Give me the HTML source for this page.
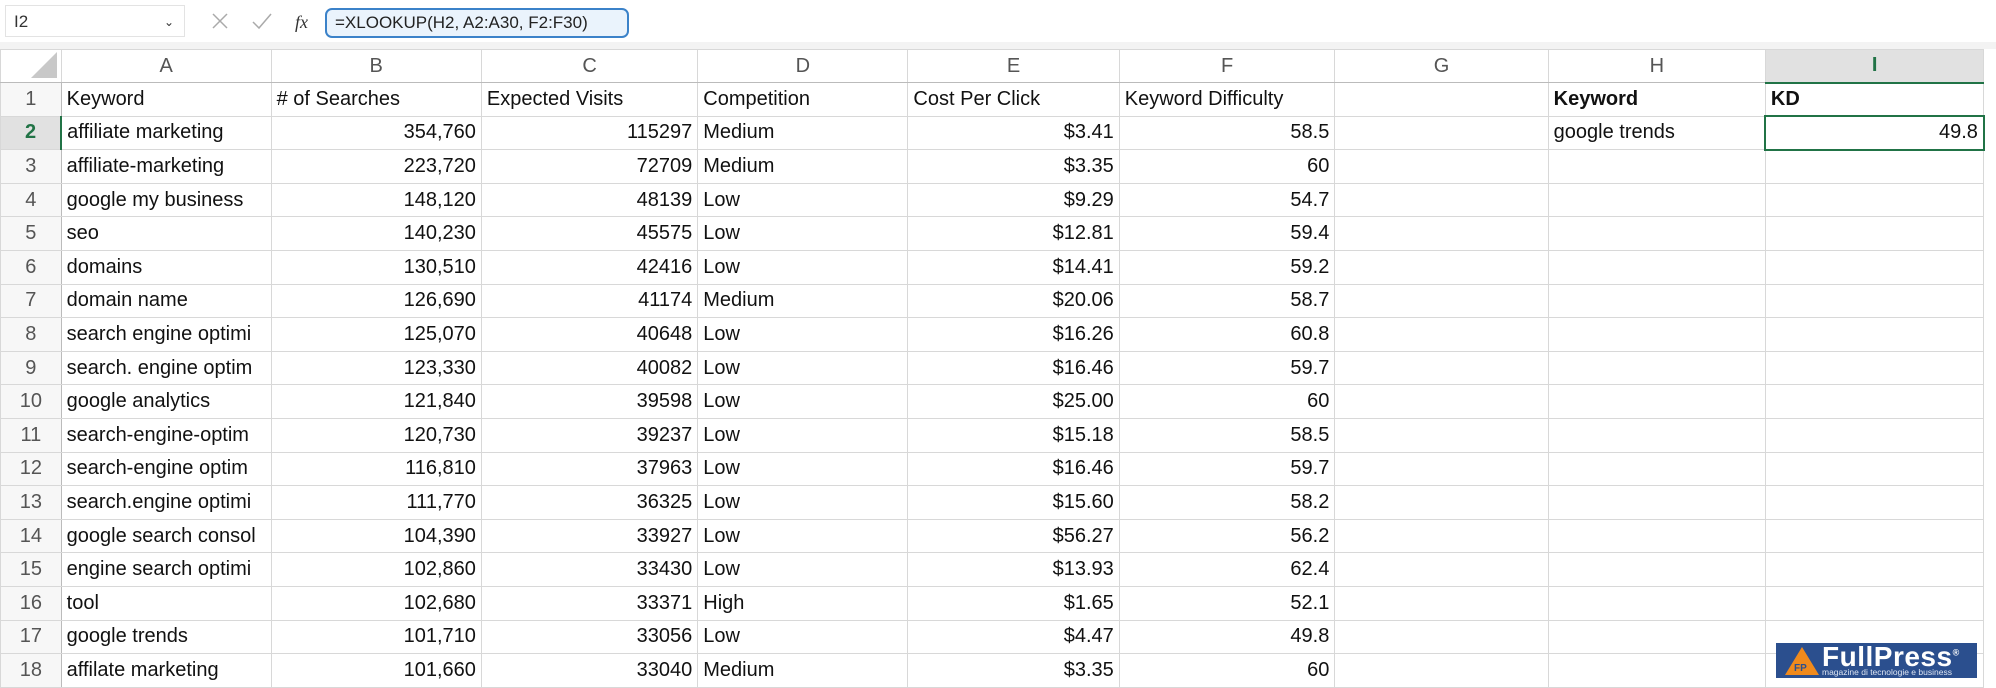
<!DOCTYPE html><html><head><meta charset="utf-8"><style>
body{margin:0;width:1996px;height:686px;overflow:hidden;background:#fff;font-family:"Liberation Sans",sans-serif;position:relative}
.fb{position:absolute;left:0;top:0;width:1996px;height:42px;background:#fff;border-bottom:1px solid #e0e0e0}
.gap{position:absolute;left:0;top:42px;width:1996px;height:7px;background:#f3f3f3}
.nb{position:absolute;left:5px;top:5px;width:180px;height:32px;border:1px solid #e3e3e3;font-size:17px;line-height:32px;padding-left:8px;box-sizing:border-box;color:#333}
.fx{position:absolute;left:325px;top:8px;width:304px;height:30px;border:2px solid #3b82c9;border-radius:7px;background:#eaf3fc;font-size:17px;line-height:26px;padding-left:8px;box-sizing:border-box;color:#222}
table{position:absolute;left:0;top:49px;border-collapse:collapse;table-layout:fixed}
td{border:1px solid #d8d8d8;height:33.6px;padding:0 5px;font-size:20px;white-space:nowrap;overflow:hidden;color:#111;box-sizing:border-box}
tr.h td{height:33px;text-align:center;color:#555;font-size:20px;background:#fff;border-bottom:1px solid #bbb}
td.r{text-align:center;color:#555;background:#f7f7f7;padding:0;border-right:1px solid #bbb}
.n{text-align:right}
</style></head><body>
<div class="fb"><div class="nb">I2<span style="position:absolute;right:10px;font-size:12px">⌄</span></div>
<svg style="position:absolute;left:205px;top:9px" width="120" height="26"><g stroke="#aaa" stroke-width="1.5" fill="none"><path d="M8 5l14 14M22 5L8 19"/><path d="M48 13l6 6 12-14"/></g><text x="90" y="19" font-family="Liberation Serif" font-style="italic" font-size="18" fill="#333">fx</text></svg>
<div class="fx">=XLOOKUP(H2, A2:A30, F2:F30)</div></div>
<div class="gap"></div>
<table>
<colgroup><col style="width:61px"><col style="width:210px"><col style="width:211px"><col style="width:217px"><col style="width:211px"><col style="width:212px"><col style="width:216px"><col style="width:215px"><col style="width:218px"><col style="width:220px"><col style="width:5px"></colgroup>
<tr class="h"><td style="position:relative"><svg style="position:absolute;right:4px;bottom:4px" width="26" height="26"><path d="M26 0V26H0Z" fill="#c8c8c8"/></svg></td><td>A</td><td>B</td><td>C</td><td>D</td><td>E</td><td>F</td><td>G</td><td>H</td><td style="background:#e1e1e1;color:#217346;border-bottom:2px solid #217346;font-weight:bold">I</td><td style="border:none"></td></tr>
<tr><td class="r">1</td><td>Keyword</td><td># of Searches</td><td>Expected Visits</td><td>Competition</td><td>Cost Per Click</td><td>Keyword Difficulty</td><td></td><td style="font-weight:bold">Keyword</td><td style="font-weight:bold">KD</td><td style="border:none"></td></tr>
<tr><td class="r" style="background:#e1e1e1;color:#217346;font-weight:bold;border-right:2px solid #217346">2</td><td>affiliate marketing</td><td class="n">354,760</td><td class="n">115297</td><td>Medium</td><td class="n">$3.41</td><td class="n">58.5</td><td></td><td>google trends</td><td class="n" style="border:2px solid #217346">49.8</td><td style="border:none"></td></tr>
<tr><td class="r">3</td><td>affiliate-marketing</td><td class="n">223,720</td><td class="n">72709</td><td>Medium</td><td class="n">$3.35</td><td class="n">60</td><td></td><td></td><td></td><td style="border:none"></td></tr>
<tr><td class="r">4</td><td>google my business</td><td class="n">148,120</td><td class="n">48139</td><td>Low</td><td class="n">$9.29</td><td class="n">54.7</td><td></td><td></td><td></td><td style="border:none"></td></tr>
<tr><td class="r">5</td><td>seo</td><td class="n">140,230</td><td class="n">45575</td><td>Low</td><td class="n">$12.81</td><td class="n">59.4</td><td></td><td></td><td></td><td style="border:none"></td></tr>
<tr><td class="r">6</td><td>domains</td><td class="n">130,510</td><td class="n">42416</td><td>Low</td><td class="n">$14.41</td><td class="n">59.2</td><td></td><td></td><td></td><td style="border:none"></td></tr>
<tr><td class="r">7</td><td>domain name</td><td class="n">126,690</td><td class="n">41174</td><td>Medium</td><td class="n">$20.06</td><td class="n">58.7</td><td></td><td></td><td></td><td style="border:none"></td></tr>
<tr><td class="r">8</td><td>search engine optimi</td><td class="n">125,070</td><td class="n">40648</td><td>Low</td><td class="n">$16.26</td><td class="n">60.8</td><td></td><td></td><td></td><td style="border:none"></td></tr>
<tr><td class="r">9</td><td>search. engine optim</td><td class="n">123,330</td><td class="n">40082</td><td>Low</td><td class="n">$16.46</td><td class="n">59.7</td><td></td><td></td><td></td><td style="border:none"></td></tr>
<tr><td class="r">10</td><td>google analytics</td><td class="n">121,840</td><td class="n">39598</td><td>Low</td><td class="n">$25.00</td><td class="n">60</td><td></td><td></td><td></td><td style="border:none"></td></tr>
<tr><td class="r">11</td><td>search-engine-optim</td><td class="n">120,730</td><td class="n">39237</td><td>Low</td><td class="n">$15.18</td><td class="n">58.5</td><td></td><td></td><td></td><td style="border:none"></td></tr>
<tr><td class="r">12</td><td>search-engine optim</td><td class="n">116,810</td><td class="n">37963</td><td>Low</td><td class="n">$16.46</td><td class="n">59.7</td><td></td><td></td><td></td><td style="border:none"></td></tr>
<tr><td class="r">13</td><td>search.engine optimi</td><td class="n">111,770</td><td class="n">36325</td><td>Low</td><td class="n">$15.60</td><td class="n">58.2</td><td></td><td></td><td></td><td style="border:none"></td></tr>
<tr><td class="r">14</td><td>google search consol</td><td class="n">104,390</td><td class="n">33927</td><td>Low</td><td class="n">$56.27</td><td class="n">56.2</td><td></td><td></td><td></td><td style="border:none"></td></tr>
<tr><td class="r">15</td><td>engine search optimi</td><td class="n">102,860</td><td class="n">33430</td><td>Low</td><td class="n">$13.93</td><td class="n">62.4</td><td></td><td></td><td></td><td style="border:none"></td></tr>
<tr><td class="r">16</td><td>tool</td><td class="n">102,680</td><td class="n">33371</td><td>High</td><td class="n">$1.65</td><td class="n">52.1</td><td></td><td></td><td></td><td style="border:none"></td></tr>
<tr><td class="r">17</td><td>google trends</td><td class="n">101,710</td><td class="n">33056</td><td>Low</td><td class="n">$4.47</td><td class="n">49.8</td><td></td><td></td><td></td><td style="border:none"></td></tr>
<tr><td class="r">18</td><td>affilate marketing</td><td class="n">101,660</td><td class="n">33040</td><td>Medium</td><td class="n">$3.35</td><td class="n">60</td><td></td><td></td><td></td><td style="border:none"></td></tr>
</table>
<div style="position:absolute;left:1776px;top:643px;width:201px;height:35px;background:#2b4f8e;overflow:hidden">
<svg style="position:absolute;left:8px;top:3px" width="36" height="30"><path d="M18 1L35 29H1Z" fill="#f08a1c"/><text x="10" y="25" font-size="10" font-weight="bold" fill="#2b4f8e" font-family="Liberation Sans">FP</text></svg>
<div style="position:absolute;left:46px;top:-2px;color:#fff;font-size:28px;font-weight:bold;letter-spacing:0.5px">FullPress<sup style="font-size:9px">®</sup></div>
<div style="position:absolute;left:46px;top:24px;color:#dfe6f2;font-size:8.5px">magazine di tecnologie e business</div></div>
</body></html>
